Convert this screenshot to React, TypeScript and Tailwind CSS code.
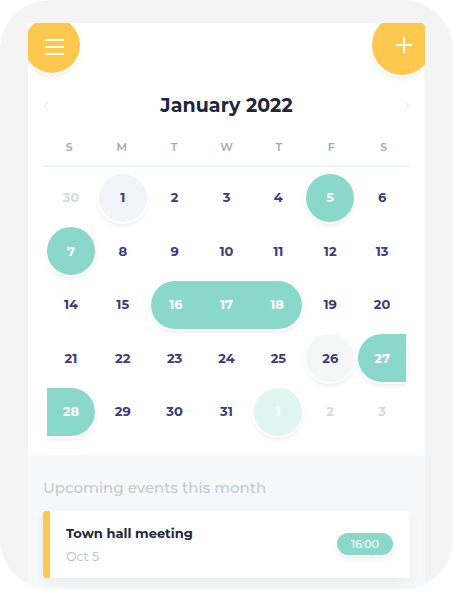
import { ChevronLeft, ChevronRight } from 'lucide-react';

type Day = {
    n: number
    muted?: boolean
    kind?: 'today' | 'event' | 'weekEnd' | 'weekStart' | 'soft' | 'next'
    range?: number[]
}

const weekdays = ['S', 'M', 'T', 'W', 'T', 'F', 'S']

const days: Day[] = [
    { n: 30, muted: true }, { n: 1, kind: 'today' }, { n: 2 }, { n: 3 }, { n: 4 }, { n: 5, kind: 'event' }, { n: 6 },
    { n: 7, kind: 'event' }, { n: 8 }, { n: 9 }, { n: 10 }, { n: 11 }, { n: 12 }, { n: 13 },
    { n: 14 }, { n: 15 }, { n: 16, range: [16, 17, 18] }, { n: 19 }, { n: 20 },
    { n: 21 }, { n: 22 }, { n: 23 }, { n: 24 }, { n: 25 }, { n: 26, kind: 'soft' }, { n: 27, kind: 'weekStart' },
    { n: 28, kind: 'weekEnd' }, { n: 29 }, { n: 30 }, { n: 31 }, { n: 1, muted: true, kind: 'next' }, { n: 2, muted: true }, { n: 3, muted: true },
]

const ring = 'shadow-[0_0_0_2px_#fff,0_3px_5px_rgba(0,0,0,0.10)]'

const DayCell = ({ day }: { day: Day }) => {
    if (day.range) {
        return (
            <div className="col-span-3 h-[53.5px] flex items-center px-[2px]">
                <div className={`w-full h-12 rounded-full bg-[#8ad8c9] grid grid-cols-3 text-white text-[13px] font-bold ${ring}`}>
                    {day.range.map((n) => (
                        <span key={n} className="flex items-center justify-center">{n}</span>
                    ))}
                </div>
            </div>
        )
    }
    const base = 'h-12 w-12 flex items-center justify-center text-[13px] font-bold'
    let shape = day.muted ? 'text-[#d6d7e0]' : 'text-[#3a3d78]'
    switch (day.kind) {
        case 'today':
            shape = `rounded-full bg-[#f1f4f8] text-[#3a3d78] ${ring}`
            break
        case 'event':
            shape = `rounded-full bg-[#8ad8c9] text-white ${ring}`
            break
        case 'soft':
            shape = `rounded-full bg-[#f5f6f6] text-[#3a3d78] ${ring}`
            break
        case 'next':
            shape = `rounded-full bg-[#e1f5f0] text-white ${ring}`
            break
        case 'weekStart':
            shape = `ml-[2px] rounded-l-full bg-[#8ad8c9] text-white ${ring}`
            break
        case 'weekEnd':
            shape = `ml-[2px] rounded-r-full bg-[#8ad8c9] text-white ${ring}`
            break
    }
    const align = day.kind === 'weekStart' || day.kind === 'weekEnd' ? 'justify-start' : 'justify-center'
    return (
        <div className={`h-[53.5px] flex items-center ${align}`}>
            <div className={`${base} ${shape}`}>{day.n}</div>
        </div>
    )
}

export default function App() {
    return (
        <div className="w-[453px] h-[591px] bg-white font-['Montserrat','Inter',sans-serif]">
            <div className="h-[589px] rounded-[50px] bg-[#f4f4f4] pt-[23px] px-[28px] overflow-hidden">
                <div className="relative h-full overflow-hidden bg-[#f7f8f9]">
                    <div className="bg-white h-[432px] pt-[69px]">
                        <div className="flex items-center justify-between px-[11px]">
                            <ChevronLeft className="w-[14px] h-[14px] text-[#dfe1e6]" strokeWidth={1.5} />
                            <h1 className="text-[19px] font-bold text-[#21253f] tracking-[0.1px]">January 2022</h1>
                            <ChevronRight className="w-[14px] h-[14px] text-[#dfe1e6]" strokeWidth={1.5} />
                        </div>
                        <div className="mx-[15px] mt-[18px] pb-[10px] border-b-2 border-[#eef3f6] grid grid-cols-7">
                            {weekdays.map((w, i) => (
                                <div key={i} className="text-center text-[11px] font-semibold text-[#a3aab6]">{w}</div>
                            ))}
                        </div>
                        <div className="mx-[17px] mt-[4px] grid grid-cols-7">
                            {days.map((d, i) => (
                                <DayCell key={i} day={d} />
                            ))}
                        </div>
                    </div>
                    <div className="px-[15px] pt-[22px]">
                        <p className="text-[15px] font-medium text-[#c6c9d2]">Upcoming events this month</p>
                        <div className="mt-[11px] h-[67px] bg-white rounded-[3px] flex items-stretch shadow-[0_4px_12px_rgba(0,0,0,0.06)] overflow-hidden">
                            <div className="w-[7px] bg-[#fec84e]" />
                            <div className="flex-1 flex items-center justify-between pl-[16px] pr-[17px]">
                                <div className="mt-[3px]">
                                    <p className="text-[13px] font-bold text-[#22263f]">Town hall meeting</p>
                                    <p className="mt-[4px] text-[12.5px] text-[#b9bdc9]">Oct 5</p>
                                </div>
                                <div className={`h-[22px] px-[14px] rounded-full bg-[#8ad8c9] text-white text-[11px] font-medium flex items-center ${ring}`}>16:00</div>
                            </div>
                        </div>
                    </div>
                    <div className={`absolute left-[-4px] top-[-6px] w-[56px] h-[56px] rounded-full bg-[#fec84e] flex items-center justify-center ${ring}`}>
                        <div className="flex flex-col gap-[5px] ml-[4px] mt-[4px]">
                            <span className="block w-[19px] h-[2px] bg-white" />
                            <span className="block w-[19px] h-[2px] bg-white" />
                            <span className="block w-[19px] h-[2px] bg-white" />
                        </div>
                    </div>
                    <div className={`absolute right-[-7px] top-[-8px] w-[60px] h-[60px] rounded-full bg-[#fec84e] flex items-center justify-center ${ring}`}>
                        <svg width="18" height="18" viewBox="0 0 18 18" className="ml-[4px]">
                            <path d="M9 1v16M1 9h16" stroke="#fff" strokeWidth="2" />
                        </svg>
                    </div>
                </div>
            </div>
        </div>
    )
}
